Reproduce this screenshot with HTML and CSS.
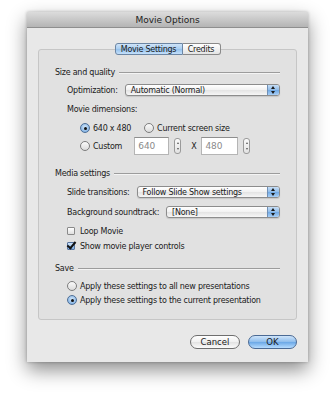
FILE: index.html
```html
<!DOCTYPE html>
<html>
<head>
<meta charset="utf-8">
<link rel="stylesheet" href="styles.css">
</head>
<body>
<div class="window">
  <div class="titlebar">Movie Options</div>
  <div class="content">
    <div class="tabs">
      <div class="tab active">Movie Settings</div>
      <div class="tab credits">Credits</div>
    </div>
    <div class="box">
      <div class="row head"><span>Size and quality</span><span class="rule"></span></div>
      <div class="row ind m4"><span class="lbl">Optimization:</span><div class="popup"><span>Automatic (Normal)</span><i class="arr"></i></div></div>
      <div class="row ind m5"><span>Movie dimensions:</span></div>
      <div class="row ind2 m5">
        <span class="radio on"></span><span class="rtext">640 x 480</span>
        <span class="radio sp"></span><span class="rtext">Current screen size</span>
      </div>
      <div class="row tall ind2 m2">
        <span class="radio"></span><span class="rtext">Custom</span>
        <span class="field">640</span><span class="stepper"></span>
        <span class="times">X</span>
        <span class="field f2">480</span><span class="stepper"></span>
      </div>
      <div class="row head m11"><span>Media settings</span><span class="rule"></span></div>
      <div class="row ind m5"><span class="lbl">Slide transitions:</span><div class="popup"><span>Follow Slide Show settings</span><i class="arr"></i></div></div>
      <div class="row ind m6"><span class="lbl">Background soundtrack:</span><div class="popup"><span>[None]</span><i class="arr"></i></div></div>
      <div class="row ind m5"><span class="check"></span><span class="ctext">Loop Movie</span></div>
      <div class="row ind m1"><span class="check on"></span><span class="ctext">Show movie player controls</span></div>
      <div class="row head m8"><span>Save</span><span class="rule"></span></div>
      <div class="row ind m4"><span class="radio"></span><span class="rtext">Apply these settings to all new presentations</span></div>
      <div class="row ind"><span class="radio on"></span><span class="rtext">Apply these settings to the current presentation</span></div>
    </div>
    <div class="buttons">
      <div class="btn">Cancel</div>
      <div class="btn ok">OK</div>
    </div>
  </div>
</div>
</body>
</html>
```

FILE: styles.css
```css
html, body { margin: 0; padding: 0; background: #fff; }
body {
  width: 335px; height: 400px; overflow: hidden;
  font-family: "DejaVu Sans", "Liberation Sans", sans-serif;
  font-size: 8px; color: #1a1a1a; letter-spacing: -0.25px;
}
.window {
  margin: 12px 0 0 27px;
  width: 281px; height: 350px;
  background: #e8e8e8;
  box-shadow: 0 8px 18px rgba(0,0,0,0.45), 0 0 3px rgba(0,0,0,0.25);
  display: flex; flex-direction: column;
}
.titlebar {
  height: 16px; line-height: 16px; text-align: center;
  background: linear-gradient(#dcdcdc, #b4b4b4);
  border-bottom: 1px solid #8e8e8e;
  box-sizing: border-box;
  font-size: 9px; color: #222; letter-spacing: 0;
}
.content { padding: 15px 11px 13px; display: flex; flex-direction: column; flex: 1; }
.tabs {
  display: flex; justify-content: center; height: 12px;
  margin-bottom: -6px; position: relative; z-index: 1;
}
.tab {
  width: 68px; height: 12px; line-height: 11px; box-sizing: border-box; text-align: center;
  border: 1px solid #8a8a8a; border-left: none;
  background: linear-gradient(#ffffff, #e4e4e4);
  font-size: 8px;
}
.tab.credits { width: 38px; }
.tab:first-child { border-left: 1px solid #8a8a8a; border-radius: 3px 0 0 3px; }
.tab:last-child { border-radius: 0 3px 3px 0; }
.tab.active {
  background: linear-gradient(#cfe4f8, #a8cdf1 50%, #94c1ec 51%, #c4e0fb);
  border-color: #6c86a4;
}
.box {
  border: 1px solid #c6c6c6; border-radius: 3px;
  background: #e1e1e1;
  padding: 15px 16px 12px 16px;
  display: flex; flex-direction: column;
}
.row { height: 14px; display: flex; align-items: center; white-space: nowrap; }
.row.tall { height: 18px; }
.head .rule { flex: 1; height: 0; border-top: 1px solid #9c9c9c; border-bottom: 1px solid #f4f4f4; margin: 2px 0 0 4px; }
.ind { padding-left: 12px; }
.ind2 { padding-left: 25px; }
.m1 { margin-top: 1px; } .m2 { margin-top: 2px; } .m4 { margin-top: 4px; }
.m5 { margin-top: 5px; } .m6 { margin-top: 6px; } .m8 { margin-top: 8px; } .m11 { margin-top: 11px; }
.lbl { margin-right: 7px; }
.popup {
  flex: 1; height: 12px; box-sizing: border-box;
  border: 1px solid #8c8c8c; border-radius: 3px;
  background: linear-gradient(#ffffff, #f1f1f1 50%, #e3e3e3 51%, #f6f6f6);
  display: flex; align-items: center; padding-left: 5px; position: relative;
  box-shadow: 0 1px 1px rgba(0,0,0,0.12);
}
.popup span { flex: 1; }
.arr {
  width: 11px; height: 10px; border-left: 1px solid #6f8fb5;
  background: linear-gradient(#c6def6, #8fbbe9 50%, #6ea7e3 51%, #a9d0f7);
  border-radius: 0 2px 2px 0; position: relative;
}
.arr::before, .arr::after {
  content: ""; position: absolute; left: 3px;
  border-left: 2px solid transparent; border-right: 2px solid transparent;
}
.arr::before { top: 1px; border-bottom: 3px solid #1a1a1a; }
.arr::after { bottom: 1px; border-top: 3px solid #1a1a1a; }
.radio {
  width: 10px; height: 10px; box-sizing: border-box; border-radius: 50%;
  border: 1px solid #7d7d7d;
  background: linear-gradient(#fafafa, #dcdcdc);
  position: relative; flex: none;
}
.radio.on {
  border-color: #4f6f97;
  background: radial-gradient(circle at 50% 40%, #d6e8fa, #6aa2dc);
}
.radio.on::after {
  content: ""; position: absolute; left: 2.5px; top: 2.5px; width: 3px; height: 3px;
  border-radius: 50%; background: #111;
}
.rtext { margin-left: 3px; }
.radio.sp { margin-left: 13px; }
.field {
  margin-left: 12px; width: 35px; height: 18px; box-sizing: border-box;
  background: #fff; border: 1px solid #b5b5b5; border-top-color: #8e8e8e;
  color: #8a8a8a; font-size: 9px; line-height: 16px; padding-left: 3px; letter-spacing: 0;
}
.field.f2 { margin-left: 0; width: 37px; }
.stepper {
  margin-left: 5px; width: 7px; height: 16px; box-sizing: border-box;
  border: 1px solid #9a9a9a; border-radius: 3px;
  background: linear-gradient(#fafafa, #e2e2e2); position: relative;
}
.stepper::before, .stepper::after {
  content: ""; position: absolute; left: 1.5px;
  border-left: 1.5px solid transparent; border-right: 1.5px solid transparent;
}
.stepper::before { top: 3px; border-bottom: 2px solid #555; }
.stepper::after { bottom: 3px; border-top: 2px solid #555; }
.times { margin: 0 5px 0 10px; font-size: 8px; }
.check {
  width: 8px; height: 8px; box-sizing: border-box;
  border: 1px solid #8a8a8a; border-radius: 1px;
  background: linear-gradient(#ffffff, #dedede); position: relative; flex: none;
}
.check.on { background: linear-gradient(#cfe3f8, #79aee5); border-color: #5774a0; }
.check.on::after {
  content: ""; position: absolute; left: 1px; top: -3px; width: 3px; height: 7px;
  border-right: 2px solid #111; border-bottom: 2px solid #111; transform: rotate(40deg);
}
.ctext { margin-left: 5px; }
.buttons { display: flex; justify-content: flex-end; gap: 8px; margin-top: 15px; }
.btn {
  height: 14px; box-sizing: border-box; border-radius: 7px;
  border: 1px solid #6e6e6e;
  background: linear-gradient(#ffffff, #f0f0f0 50%, #e2e2e2 51%, #fbfbfb);
  text-align: center; line-height: 12px; font-size: 8.5px; width: 50px; letter-spacing: 0;
}
.btn.ok {
  width: 49px; border-color: #4b6a94;
  background: linear-gradient(#cfe5fb, #8dbcec 50%, #6aa7e6 51%, #b6dcff);
}
```
